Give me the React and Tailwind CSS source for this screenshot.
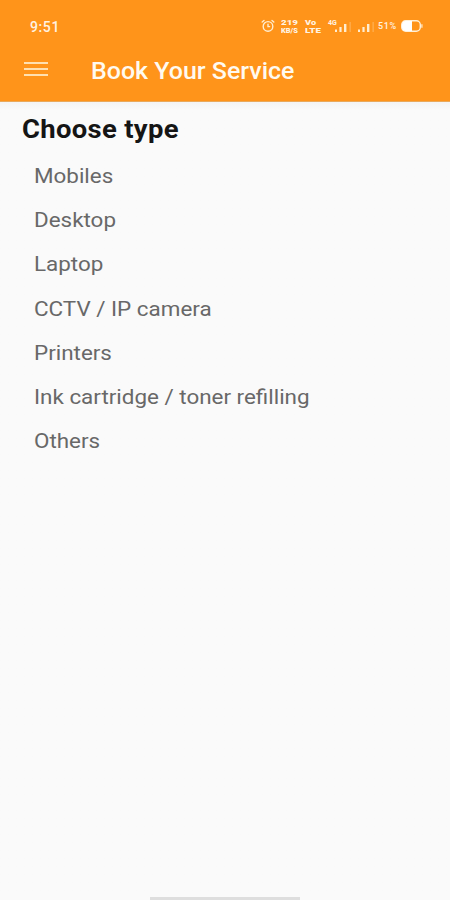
const items = [
  'Mobiles',
  'Desktop',
  'Laptop',
  'CCTV / IP camera',
  'Printers',
  'Ink cartridge / toner refilling',
  'Others',
];

function AlarmIcon() {
  return (
    <svg width="14" height="14" viewBox="0 0 14 14" fill="none" stroke="#ffedd0" strokeWidth="1.4" strokeLinecap="round">
      <circle cx="7" cy="7.4" r="4.8" />
      <path d="M1.2 3 3 1.4M12.8 3 11 1.4M7 5.2v2.4h1.6" />
    </svg>
  );
}

function SignalIcon() {
  return (
    <svg width="17" height="10" viewBox="0 0 17 10" fill="#ffedd0">
      <rect x="0" y="7.5" width="2" height="2.5" />
      <rect x="4.4" y="5" width="2.2" height="5" />
      <rect x="9" y="2" width="2.4" height="8" />
      <rect x="14.5" y="0" width="1.3" height="10" opacity=".3" />
    </svg>
  );
}

function BatteryIcon() {
  return (
    <svg width="22" height="12" viewBox="0 0 22 12" fill="none">
      <rect x=".7" y=".7" width="18.6" height="10.6" rx="4" stroke="#fff0d8" strokeWidth="1.4" />
      <path d="M4.5 1H11v10H4.5A3.5 3.5 0 0 1 1 7.5v-3A3.5 3.5 0 0 1 4.5 1Z" fill="#fff" />
      <path d="M20.9 4.3v3.4" stroke="#fff0d8" strokeWidth="1.2" />
    </svg>
  );
}

function StatusBar() {
  return (
    <div className="flex h-[38px] items-start pl-[30px] pt-[19px] text-[#fff3e2]">
      <span className="w-[231px] text-[14px] font-medium leading-[16px] tracking-[0.6px]">9:51</span>
      <AlarmIcon />
      <div className="ml-[6px] flex w-[19px] flex-col text-[8px] font-black leading-[8px]">
        <span className="h-[8px] w-fit origin-left scale-x-[1.22]">219</span>
        <span className="h-[8px] w-fit origin-left scale-x-[0.93]">KB/S</span>
      </div>
      <div className="ml-[5px] flex w-[20px] flex-col text-[8px] font-black leading-[8px]">
        <span className="h-[8px] w-fit origin-left scale-x-[1.15]">Vo</span>
        <span className="h-[8px] w-fit origin-left scale-x-[1.22]">LTE</span>
      </div>
      <span className="ml-[3px] w-[7px] text-[7px] font-bold leading-[8px]">4G</span>
      <div className="mt-[3px] w-[23px]"><SignalIcon /></div>
      <div className="mt-[3px] w-[20px]"><SignalIcon /></div>
      <span className="w-[22.5px] text-[9px] font-medium leading-[14px] tracking-[0.6px]">51%</span>
      <div className="mt-px"><BatteryIcon /></div>
    </div>
  );
}

export default function App() {
  return (
    <div className="flex h-[900px] w-[450px] flex-col overflow-hidden bg-[#fafafa] font-['Roboto',sans-serif]">
      <header className="h-[102px] shrink-0 border-b border-[#e9a95c] bg-[#ff941a]">
        <StatusBar />
        <div className="flex h-[64px] items-center pl-6">
          <button aria-label="Menu" className="-mt-[2px] flex w-6 flex-col gap-1">
            <span className="h-[2px] bg-[#ffe0b0]" />
            <span className="h-[2px] bg-[#ffe0b0]" />
            <span className="h-[2px] bg-[#ffe0b0]" />
          </button>
          <h1 className="ml-[42.5px] mt-px origin-left scale-x-[1.062] whitespace-nowrap text-[23.5px] font-medium leading-8 text-[#fffaf0]">Book Your Service</h1>
        </div>
      </header>
      <main className="flex-1 bg-linear-to-b from-[#f3f4f5] from-0% to-[#fafafa] to-[8px] pt-[11px]">
        <h2 className="ml-[22px] w-fit origin-left scale-x-[1.055] text-[26px] font-bold leading-8 tracking-[0.3px] text-[#151515]">Choose type</h2>
        <ul className="pl-[34px] pt-[9px]">
          {items.map((item) => (
            <li key={item} className="h-[44.2px] w-fit origin-left scale-x-[1.067] whitespace-nowrap text-[21px] leading-[44.2px] text-[#686868]">{item}</li>
          ))}
        </ul>
      </main>
      <div className="mx-auto h-[3px] w-[150px] shrink-0 bg-[#dedede]" />
    </div>
  );
}
